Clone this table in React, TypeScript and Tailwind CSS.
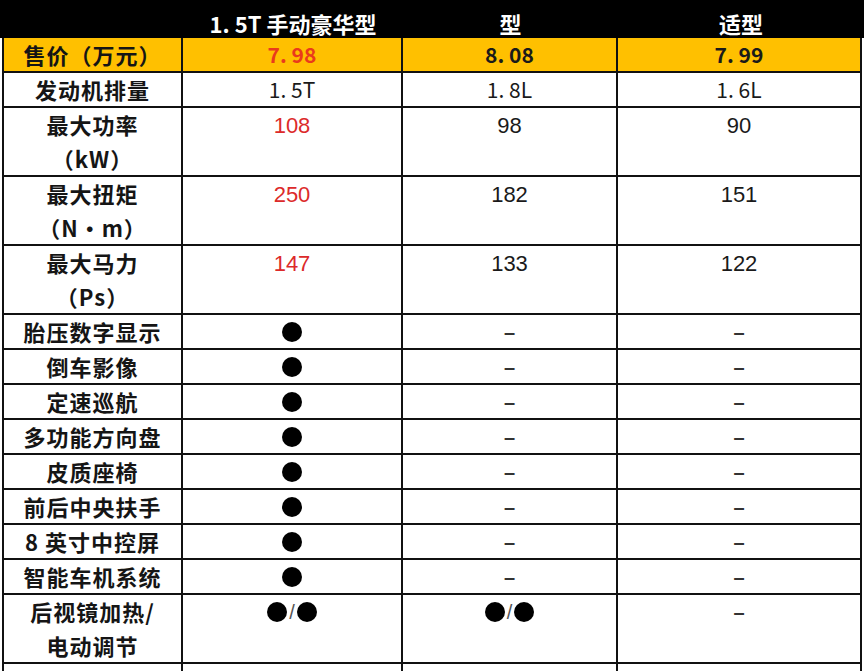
import React from 'react';

type Val =
  | { k: 'num'; v: string; red?: boolean }
  | { k: 'cjk'; v: string; red?: boolean; bold?: boolean }
  | { k: 'dot' }
  | { k: 'dash' }
  | { k: 'dots' }
  | { k: 'none' };

type Row = { label: string[]; vals: Val[]; tall?: boolean; yellow?: boolean };

const n = (v: string, red?: boolean): Val => ({ k: 'num', v, red });
const dot: Val = { k: 'dot' };
const dash: Val = { k: 'dash' };

const rows: Row[] = [
  {
    label: ['售价（万元）'],
    yellow: true,
    vals: [
      { k: 'cjk', v: '7. 98', red: true, bold: true },
      { k: 'cjk', v: '8. 08', bold: true },
      { k: 'cjk', v: '7. 99', bold: true },
    ],
  },
  {
    label: ['发动机排量'],
    vals: [
      { k: 'cjk', v: '1. 5T' },
      { k: 'cjk', v: '1. 8L' },
      { k: 'cjk', v: '1. 6L' },
    ],
  },
  { label: ['最大功率', '（kW）'], tall: true, vals: [n('108', true), n('98'), n('90')] },
  { label: ['最大扭矩', '（N・m）'], tall: true, vals: [n('250', true), n('182'), n('151')] },
  { label: ['最大马力', '（Ps）'], tall: true, vals: [n('147', true), n('133'), n('122')] },
  { label: ['胎压数字显示'], vals: [dot, dash, dash] },
  { label: ['倒车影像'], vals: [dot, dash, dash] },
  { label: ['定速巡航'], vals: [dot, dash, dash] },
  { label: ['多功能方向盘'], vals: [dot, dash, dash] },
  { label: ['皮质座椅'], vals: [dot, dash, dash] },
  { label: ['前后中央扶手'], vals: [dot, dash, dash] },
  { label: ['8 英寸中控屏'], vals: [dot, dash, dash] },
  { label: ['智能车机系统'], vals: [dot, dash, dash] },
  { label: ['后视镜加热/', '电动调节'], tall: true, vals: [{ k: 'dots' }, { k: 'dots' }, dash] },
  { label: ['后排独立空调'], vals: [dot, { k: 'none' }, dot] },
];

const widths = ['w-[179px]', 'w-[220px]', 'w-[215px]', 'w-[244px]'];

const cjk = { fontFamily: '"Noto Sans CJK SC", "Noto Sans", sans-serif' };
const lat = { fontFamily: '"Liberation Sans", Arial, sans-serif' };

function Circle() {
  return <span className="inline-block w-[20px] h-[20px] rounded-full bg-black" />;
}

function ValueContent({ v }: { v: Val }) {
  if (v.k === 'num')
    return (
      <span style={lat} className={`text-[22px] ${v.red ? 'text-[#dc2a2a]' : 'text-[#1a1a1a]'}`}>
        {v.v}
      </span>
    );
  if (v.k === 'cjk')
    return (
      <span
        style={cjk}
        className={`text-[21px] ${v.bold ? 'font-bold' : 'font-normal'} ${
          v.red ? 'text-[#ea3a1c]' : 'text-[#1a1a1a]'
        }`}
      >
        {v.v}
      </span>
    );
  if (v.k === 'dot') return <Circle />;
  if (v.k === 'dash')
    return (
      <span style={lat} className="text-[20px] font-bold text-[#333]">
        –
      </span>
    );
  if (v.k === 'dots')
    return (
      <span className="flex items-center">
        <Circle />
        <span style={lat} className="text-[20px] text-[#555] mx-[2px]">
          /
        </span>
        <Circle />
      </span>
    );
  return null;
}

export default function App() {
  const head: [string, string, string][] = [
    ['w-[183px]', '车型', ''],
    ['w-[220px]', '2019款 逸动', '1. 5T 手动豪华型'],
    ['w-[215px]', '2019款 1.8L 手动豪华', '型'],
    ['w-[246px]', '2019款 1.6L 手动舒', '适型'],
  ];
  return (
    <div className="w-[864px] h-[671px] overflow-hidden bg-white">
      <div className="-mt-[24px]">
        {/* header */}
        <div className="flex h-[62px] bg-black text-white" style={cjk}>
          {head.map(([w, l1, l2], i) => (
            <div key={i} className={`${w} flex flex-col items-center`}>
              <div className="h-[24px] pb-[5px] flex items-center text-[22px] font-bold whitespace-nowrap leading-none">
                {l1}
              </div>
              <div className="h-[38px] pt-[8px] flex items-center text-[22px] font-bold whitespace-nowrap leading-none">
                {l2}
              </div>
            </div>
          ))}
        </div>
        {/* body */}
        <div className="ml-[2px] w-[860px] border-l-2 border-[#111]">
          {rows.map((r, i) => (
            <div
              key={i}
              className={`flex ${r.tall ? 'h-[69px]' : 'h-[35px]'} border-b-2 border-[#111] ${
                r.yellow ? 'bg-[#ffc000]' : 'bg-white'
              }`}
            >
              <div className={`${widths[0]} border-r-2 border-[#111] flex flex-col`}>
                {r.label.map((l, j) => (
                  <div
                    key={j}
                    style={cjk}
                    className="h-[34px] flex items-center justify-center text-[22px] font-bold tracking-[1px] text-[#151515] whitespace-nowrap"
                  >
                    {l}
                  </div>
                ))}
              </div>
              {r.vals.map((v, j) => (
                <div key={j} className={`${widths[j + 1]} border-r-2 border-[#111] flex flex-col`}>
                  <div className="h-[34px] flex items-center justify-center">
                    <ValueContent v={v} />
                  </div>
                </div>
              ))}
            </div>
          ))}
        </div>
      </div>
    </div>
  );
}
